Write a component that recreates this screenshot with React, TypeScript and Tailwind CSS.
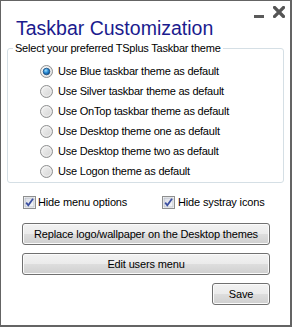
import React from "react";

const font = { fontFamily: '"Liberation Sans", Arial, sans-serif' };

function Radio({ checked }: { checked?: boolean }) {
  return (
    <svg width="13" height="13" viewBox="0 0 13 13" className="shrink-0">
      <defs>
        <linearGradient id="rb" x1="0" y1="0" x2="1" y2="1">
          <stop offset="0" stopColor="#f4f4f4" />
          <stop offset="1" stopColor="#d2d2d2" />
        </linearGradient>
        <radialGradient id="rd" cx="0.4" cy="0.35" r="0.7">
          <stop offset="0" stopColor="#9fe0ff" />
          <stop offset="0.5" stopColor="#2a8ad4" />
          <stop offset="1" stopColor="#0d4a86" />
        </radialGradient>
      </defs>
      <circle cx="6.5" cy="6.5" r="6" fill="url(#rb)" stroke="#8f9091" strokeWidth="1" />
      <circle cx="6.5" cy="6.5" r="4.6" fill="none" stroke="#ffffff" strokeOpacity="0.6" strokeWidth="0.8" />
      {checked && <circle cx="6.5" cy="6.5" r="3.3" fill="url(#rd)" stroke="#1c4f80" strokeWidth="0.8" />}
    </svg>
  );
}

function Check() {
  return (
    <svg width="13" height="13" viewBox="0 0 13 13" className="shrink-0">
      <defs>
        <linearGradient id="cb" x1="0" y1="0" x2="1" y2="1">
          <stop offset="0" stopColor="#d9dce4" />
          <stop offset="1" stopColor="#f6f7f9" />
        </linearGradient>
      </defs>
      <rect x="0.5" y="0.5" width="12" height="12" fill="#fff" stroke="#8e8f8f" />
      <rect x="2" y="2" width="9" height="9" fill="url(#cb)" stroke="#b4b9c4" strokeWidth="0.8" />
      <path d="M3.2 6.6 L5.3 9.2 L10 2.8" fill="none" stroke="#3b4fa1" strokeWidth="1.8" />
    </svg>
  );
}

function Button({ children, className }: { children: React.ReactNode; className: string }) {
  return (
    <div
      className={`h-[22px] flex items-center justify-center rounded-[3px] border border-[#707070] bg-[linear-gradient(to_bottom,#f2f2f2_0%,#ebebeb_48%,#dddddd_52%,#cfcfcf_100%)] shadow-[inset_0_0_0_1px_#fbfbfb] text-[11px] tracking-[-0.15px] text-black ${className}`}
    >
      {children}
    </div>
  );
}

const options = [
  "Use Blue taskbar theme as default",
  "Use Silver taskbar theme as default",
  "Use OnTop taskbar theme as default",
  "Use Desktop theme one as default",
  "Use Desktop theme two as default",
  "Use Logon theme as default",
];

export default function App() {
  return (
    <div
      style={font}
      className="w-[292px] h-[327px] bg-white border-l border-t border-r-2 border-b-2 border-[#646464] flex flex-col"
    >
      <div className="h-[41px] flex items-start justify-between">
        <div className="pl-[15px] pt-[15px] text-[19.5px] leading-[24px] text-[#1b1b8e]">
          Taskbar Customization
        </div>
        <div className="flex items-start pt-[5px] pr-[5px]">
          <div className="w-[10px] h-[3px] bg-[#5a5a5a] mt-[9px] mr-[9px]" />
          <svg width="12" height="12" viewBox="0 0 12 12">
            <path d="M1.5 1.5 L10.5 10.5 M10.5 1.5 L1.5 10.5" stroke="#555" strokeWidth="3.2" strokeLinecap="square" />
          </svg>
        </div>
      </div>
      <fieldset className="mx-[6px] border border-[#d5dfe5] rounded-[3px] pb-[1px]">
        <legend className="ml-[5px] px-[2px] text-[11px] leading-[13px] tracking-[-0.22px] text-black">
          Select your preferred TSplus Taskbar theme
        </legend>
        <div className="flex flex-col pt-[6px] pl-[32px]">
          {options.map((o, i) => (
            <div key={o} className="h-[20px] flex items-center gap-[5px] text-[11px] tracking-[-0.22px] text-black">
              <Radio checked={i === 0} />
              <span>{o}</span>
            </div>
          ))}
        </div>
      </fieldset>
      <div className="mt-[11px] h-[16px] flex items-center text-[11px] tracking-[-0.15px] text-black">
        <div className="ml-[22px] w-[139px] flex items-center gap-[2px]">
          <Check />
          <span>Hide menu options</span>
        </div>
        <div className="flex items-center gap-[3px]">
          <Check />
          <span>Hide systray icons</span>
        </div>
      </div>
      <div className="mt-[13px] flex flex-col items-end pl-[21px] pr-[20px] gap-[8px]">
        <Button className="w-full">Replace logo/wallpaper on the Desktop themes</Button>
        <Button className="w-full">Edit users menu</Button>
        <Button className="w-[58px]">Save</Button>
      </div>
    </div>
  );
}
